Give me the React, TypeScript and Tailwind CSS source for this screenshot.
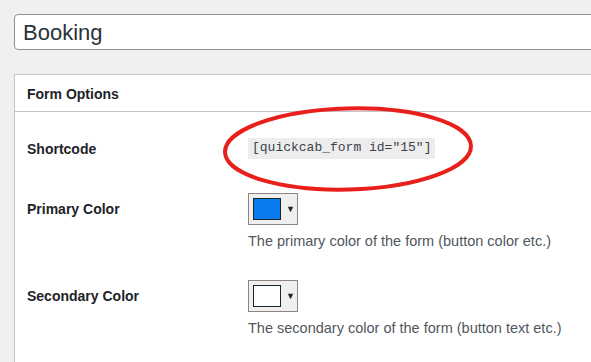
import React from "react";

function ColorButton({ color }: { color: string }) {
  return (
    <div className="flex h-[32px] w-[50px] items-center border border-[#8e857e] bg-[#efefef] pl-[4px]">
      <div className="h-[22px] w-[28px] border border-[#1d2327]" style={{ backgroundColor: color }} />
      <span className="ml-[5px] text-[9px] leading-none text-[#1d2327]">▼</span>
    </div>
  );
}

export default function App() {
  return (
    <div
      className="relative h-[362px] w-[591px] overflow-hidden bg-[#f0f0f1] pt-[14px] pl-[14px]"
      style={{ fontFamily: '"Liberation Sans", Arial, sans-serif' }}
    >
      <div className="flex h-[36px] w-[620px] items-center rounded-[4px] border border-[#8c8f94] bg-white pl-[8px] pt-[1px] text-[22px] text-[#2c3338]">
        Booking
      </div>

      <div className="mt-[24px] h-[300px] w-[620px] border border-[#c3c4c7] bg-white">
        <div className="flex h-[37px] items-center border-b border-[#c3c4c7] pl-[12px] pt-[3px] text-[14px] font-bold text-[#1d2327]">
          Form Options
        </div>

        <div className="relative flex items-center pt-[24px] pl-[12px]">
          <div className="w-[221px] pt-[3px] text-[14px] font-bold text-[#1d2327]">Shortcode</div>
          <div className="flex h-[21px] items-center bg-[#ededed] px-[4px] text-[13px] text-[#3c434a]" style={{ fontFamily: '"Liberation Mono", "DejaVu Sans Mono", monospace' }}>
            [quickcab_form id="15"]
          </div>
          <svg className="pointer-events-none absolute left-[206px] top-[-8px]" width="254" height="90" viewBox="0 0 254 90">
            <ellipse cx="127" cy="45" rx="123" ry="40.5" fill="none" stroke="#e8201c" strokeWidth="4" transform="rotate(-1.5 127 45)" />
          </svg>
        </div>

        <div className="flex pt-[33px] pl-[12px]">
          <div className="flex h-[32px] w-[221px] items-center text-[14px] font-bold text-[#1d2327]">Primary Color</div>
          <div className="flex flex-col">
            <ColorButton color="#0a7cf0" />
            <div className="mt-[7px] text-[14.5px] leading-[19px] text-[#50575e]">The primary color of the form (button color etc.)</div>
          </div>
        </div>

        <div className="flex pt-[29px] pl-[12px]">
          <div className="flex h-[32px] w-[221px] items-center text-[14px] font-bold text-[#1d2327]">Secondary Color</div>
          <div className="flex flex-col">
            <ColorButton color="#ffffff" />
            <div className="mt-[7px] text-[14.5px] leading-[19px] text-[#50575e]">The secondary color of the form (button text etc.)</div>
          </div>
        </div>
      </div>
    </div>
  );
}
